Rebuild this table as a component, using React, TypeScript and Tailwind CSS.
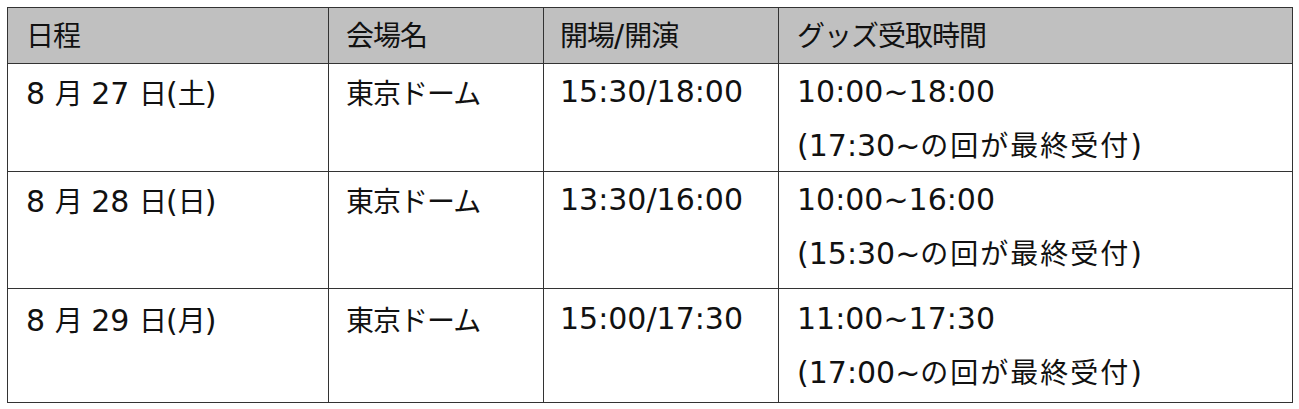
const CJK = /([\u3000-\u30ff\u3400-\u9fff\uff00-\uffef]+)/;

function Mixed({ text, spaced }: { text: string; spaced?: boolean }) {
  return (
    <>
      {text.split(CJK).map((part, i) =>
        part === '' ? null : i % 2 === 1 ? (
          <span
            key={i}
            className={`font-['Noto_Sans_CJK_JP',sans-serif] text-[28px] ${spaced ? 'tracking-[2px]' : 'tracking-[-1px]'}`}
          >
            {part}
          </span>
        ) : (
          <span key={i}>{part}</span>
        )
      )}
    </>
  );
}

const headers = ['日程', '会場名', '開場/開演', 'グッズ受取時間'];

const rows = [
  {
    date: '8 月 27 日(土)',
    venue: '東京ドーム',
    time: '15:30/18:00',
    goods: '10:00~18:00',
    note: '(17:30~の回が最終受付)',
    height: 'h-[108px]',
    pad: 'pt-[2px]',
  },
  {
    date: '8 月 28 日(日)',
    venue: '東京ドーム',
    time: '13:30/16:00',
    goods: '10:00~16:00',
    note: '(15:30~の回が最終受付)',
    height: 'h-[117px]',
    pad: 'pt-[2px]',
  },
  {
    date: '8 月 29 日(月)',
    venue: '東京ドーム',
    time: '15:00/17:30',
    goods: '11:00~17:30',
    note: '(17:00~の回が最終受付)',
    height: 'h-[114px]',
    pad: 'pt-[4px]',
  },
];

const cols = ['w-[321px] pl-[18px]', 'w-[215px] pl-[17px]', 'w-[235px] pl-[16px]', 'w-[514px] pl-[18px]'];

export default function App() {
  return (
    <div className="w-[1299px] h-[409px] bg-white pt-[7px] pl-[7px]">
      <div className="w-[1286px] border-l border-t border-[#333] font-['DejaVu_Sans','Noto_Sans_CJK_JP',sans-serif] text-[30px] leading-[52px] text-[#111]">
        <div className="flex h-[56px] bg-[#c0c0c0]">
          {headers.map((h, i) => (
            <div key={h} className={`${cols[i]} shrink-0 border-r border-b border-[#333] whitespace-nowrap`}>
              <Mixed text={h} />
            </div>
          ))}
        </div>
        {rows.map((r) => (
          <div key={r.date} className={`flex ${r.height}`}>
            <div className={`${cols[0]} ${r.pad} shrink-0 border-r border-b border-[#333] whitespace-nowrap`}>
              <Mixed text={r.date} />
            </div>
            <div className={`${cols[1]} ${r.pad} shrink-0 border-r border-b border-[#333] whitespace-nowrap`}>
              <Mixed text={r.venue} />
            </div>
            <div className={`${cols[2]} ${r.pad} shrink-0 border-r border-b border-[#333] whitespace-nowrap`}>
              <Mixed text={r.time} />
            </div>
            <div className={`${cols[3]} ${r.pad} shrink-0 border-r border-b border-[#333] whitespace-nowrap`}>
              <div>
                <Mixed text={r.goods} />
              </div>
              <div>
                <Mixed text={r.note} spaced />
              </div>
            </div>
          </div>
        ))}
      </div>
    </div>
  );
}
